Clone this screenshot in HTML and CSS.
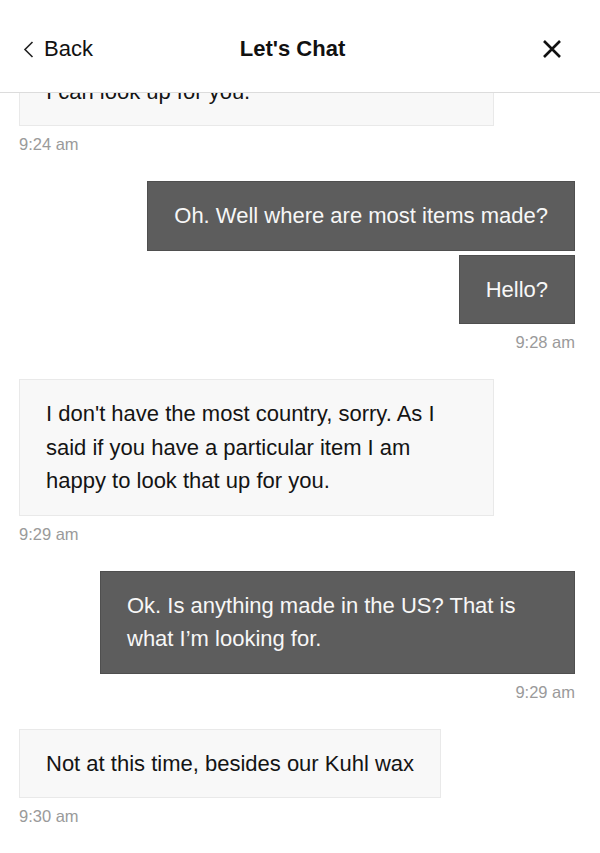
FILE: index.html
```html
<!DOCTYPE html>
<html lang="en">
<head>
<meta charset="utf-8">
<title>Let's Chat</title>
<link rel="stylesheet" href="styles.css">
</head>
<body>
<div class="app">
  <header class="topbar">
    <button class="back" type="button">
      <svg class="chev" width="11" height="17" viewBox="0 0 11 17" aria-hidden="true"><polyline points="9.5,1 2,8.5 9.5,16" fill="none" stroke="#222" stroke-width="1.6" stroke-linejoin="miter"/></svg>
      <span>Back</span>
    </button>
    <h1 class="title">Let's Chat</h1>
    <button class="close" type="button" aria-label="Close">
      <svg width="20" height="20" viewBox="0 0 20 20" aria-hidden="true"><path d="M2 2 L18 18 M18 2 L2 18" stroke="#111" stroke-width="2.6" stroke-linecap="butt"/></svg>
    </button>
  </header>
  <main class="chat">
    <div class="thread">
      <div class="msg in full">Let me know if there's a specific item<br>I can look up for you.</div>
      <div class="time">9:24 am</div>

      <div class="msg out">Oh. Well where are most items made?</div>
      <div class="msg out stacked">Hello?</div>
      <div class="time right">9:28 am</div>

      <div class="msg in">I don't have the most country, sorry. As I said if you have a particular item I am happy to look that up for you.</div>
      <div class="time">9:29 am</div>

      <div class="msg out">Ok. Is anything made in the US? That is what I’m looking for.</div>
      <div class="time right">9:29 am</div>

      <div class="msg in">Not at this time, besides our Kuhl wax</div>
      <div class="time">9:30 am</div>
    </div>
  </main>
</div>
</body>
</html>
```

FILE: styles.css
```css
* { box-sizing: border-box; }
html, body { margin: 0; padding: 0; background: #fff; }
body {
  font-family: "Liberation Sans", Arial, sans-serif;
  color: #111;
  width: 600px;
  height: 853px;
  overflow: hidden;
}
.app { display: flex; flex-direction: column; height: 853px; }
.topbar {
  flex: none;
  height: 93px;
  border-bottom: 1px solid #dcdcdc;
  display: grid;
  grid-template-columns: 1fr auto 1fr;
  align-items: center;
  padding: 5px 38px 0 23px;
  background: #fff;
  position: relative;
  z-index: 2;
}
.back {
  justify-self: start;
  display: flex;
  align-items: center;
  gap: 10px;
  background: none;
  border: 0;
  padding: 0;
  font: inherit;
  font-size: 22px;
  color: #111;
}
.chev { display: block; margin-top: 1px; }
.title {
  margin: 0;
  font-size: 22px;
  font-weight: 700;
  color: #111;
}
.close {
  justify-self: end;
  background: none;
  border: 0;
  padding: 0;
  display: flex;
}
.chat {
  flex: 1;
  overflow: hidden;
  padding: 0 25px 0 19px;
}
.thread {
  display: flex;
  flex-direction: column;
  margin-top: -70px;
}
.msg {
  max-width: 475px;
  padding: 17px 26px;
  font-size: 22px;
  line-height: 33.5px;
  border: 1px solid;
}
.msg.full { width: 475px; }
.msg.in {
  align-self: flex-start;
  background: #f8f8f8;
  border-color: #e9e9e9;
  color: #141414;
}
.msg.out {
  align-self: flex-end;
  background: #5d5d5d;
  border-color: #4f4f4f;
  color: #f7f7f7;
}
.msg.stacked { margin-top: 4px; }
.time {
  margin: 8px 0 27px;
  font-size: 16.5px;
  line-height: 20px;
  color: #9a9a9a;
}
.time.right { text-align: right; }
```
